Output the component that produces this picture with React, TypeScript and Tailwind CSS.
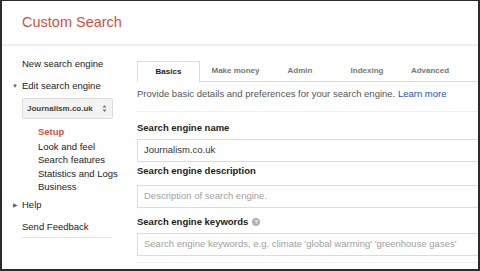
import React from "react";

const font = { fontFamily: '"Liberation Sans", Arial, sans-serif' };

function Tab({ label, active, w }: { label: string; active?: boolean; w: string }) {
  return (
    <div
      className={
        active
          ? `${w} -mb-px flex h-[21px] items-center justify-center border border-b-0 border-[#dcdcdc] bg-white text-[8px] font-bold text-[#222]`
          : `${w} flex h-[20px] items-center justify-center text-[8px] font-bold text-[#777]`
      }
    >
      {label}
    </div>
  );
}

function Field({ value, placeholder }: { value?: string; placeholder?: string }) {
  return (
    <div className="flex h-[23px] w-[360px] items-center border border-[#dcdcdc] bg-white pl-[6px] text-[9.5px]">
      {value ? <span className="text-[#333]">{value}</span> : <span className="text-[#a0a0a0]">{placeholder}</span>}
    </div>
  );
}

export default function App() {
  return (
    <div className="h-[271px] w-[480px] overflow-hidden bg-[#2b2b2b]" style={font}>
      <div className="ml-[2px] mt-px h-[268px] w-[476px] overflow-hidden bg-white">
        <header className="flex h-[45px] items-center border-b-2 border-[#efefef] pl-[20px]">
          <h1 className="text-[14.5px] leading-none text-[#dd4b39]">Custom Search</h1>
        </header>

        <div className="flex">
          <nav className="w-[135px] shrink-0 pl-[20px] text-[9.5px] text-[#222]">
            <div className="mt-[11px] leading-[14px]">New search engine</div>
            <div className="relative mt-[8px] leading-[14px]">
              <span className="absolute -left-[10px] top-0 text-[6px] text-[#666]">▼</span>
              Edit search engine
            </div>
            <div className="mt-[5px] flex h-[21px] w-[91px] items-center justify-between rounded-[2px] border border-[#dcdcdc] bg-[#f3f3f3] pl-[4px] pr-[5px] text-[8px] font-bold text-[#444]">
              <span>Journalism.co.uk</span>
              <svg width="5" height="9" viewBox="0 0 5 9">
                <path d="M0.5 3.5 L2.5 1 L4.5 3.5 Z M0.5 5.5 L2.5 8 L4.5 5.5 Z" fill="#777" />
              </svg>
            </div>
            <div className="mt-[6px] pl-[16px] leading-[13.5px]">
              <div className="font-bold text-[#dd4b39]">Setup</div>
              <div className="mt-px">Look and feel</div>
              <div>Search features</div>
              <div>Statistics and Logs</div>
              <div>Business</div>
            </div>
            <div className="relative mt-[4px] leading-[14px]">
              <span className="absolute -left-[9px] top-0 text-[6px] text-[#666]">▶</span>
              Help
            </div>
            <div className="mt-[8px] w-[90px] border-b border-[#e5e5e5] pb-[3px] leading-[14px]">Send Feedback</div>
          </nav>

          <main className="min-w-0 flex-1 overflow-hidden">
            <div className="mt-[15px] flex border-b border-[#dcdcdc]">
              <Tab label="Basics" active w="w-[63px]" />
              <Tab label="Make money" w="w-[71px]" />
              <Tab label="Admin" w="w-[58px]" />
              <Tab label="Indexing" w="w-[76px]" />
              <Tab label="Advanced" w="w-[50px]" />
            </div>
            <p className="mt-[6px] text-[9.5px] leading-[12px] text-[#555]">
              Provide basic details and preferences for your search engine.{" "}
              <span className="text-[#1155cc]">Learn more</span>
            </p>
            <div className="mt-[11px] border-t border-[#efefef]" />
            <div className="mt-[10px] text-[9.5px] font-bold leading-[12px] text-[#222]">Search engine name</div>
            <div className="mt-[5px]">
              <Field value="Journalism.co.uk" />
            </div>
            <div className="mt-[3px] text-[9.5px] font-bold leading-[12px] text-[#222]">Search engine description</div>
            <div className="mt-[8px]">
              <Field placeholder="Description of search engine." />
            </div>
            <div className="mt-[8px] flex items-center gap-[4px] text-[9.5px] font-bold leading-[12px] text-[#222]">
              Search engine keywords
              <span className="flex h-[8px] w-[8px] items-center justify-center rounded-full bg-[#b0b0b0] text-[6px] leading-none text-white">?</span>
            </div>
            <div className="mt-[5px]">
              <Field placeholder="Search engine keywords, e.g. climate 'global warming' 'greenhouse gases'" />
            </div>
            <div className="mt-[6px] border-t border-[#efefef]" />
          </main>
        </div>
      </div>
    </div>
  );
}
